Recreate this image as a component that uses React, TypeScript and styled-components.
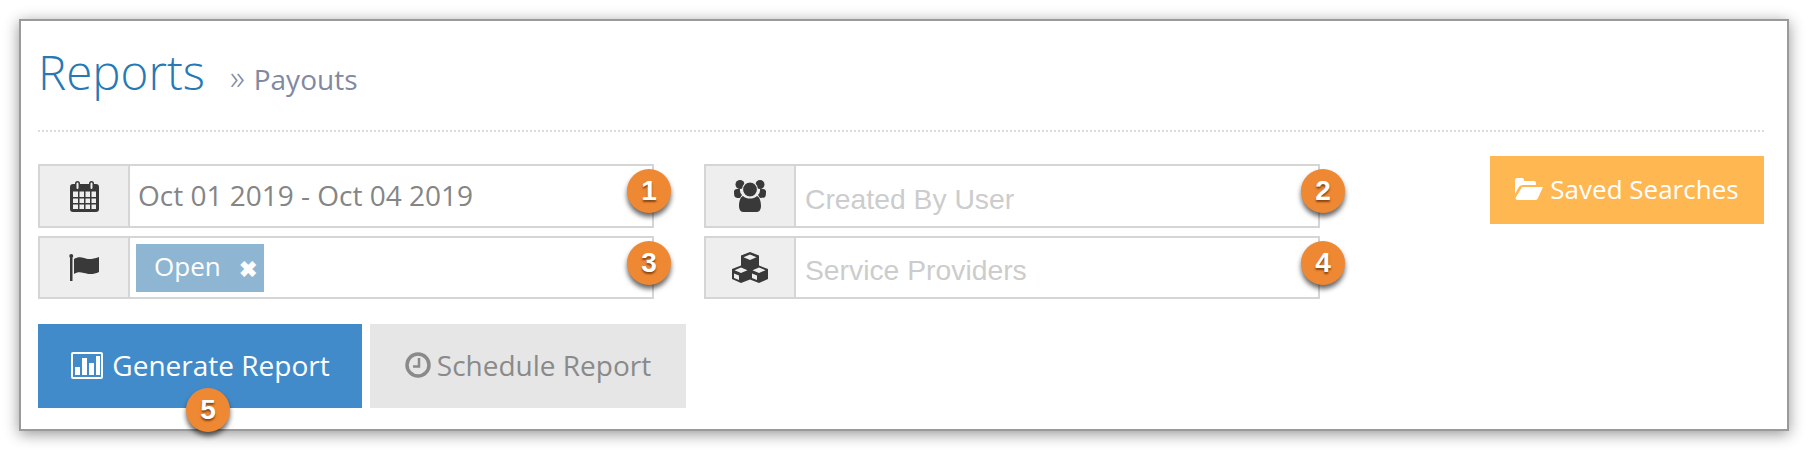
import React from 'react';
import styled, { createGlobalStyle } from 'styled-components';

const GlobalStyle = createGlobalStyle`
  html, body {
    margin: 0;
    padding: 0;
    background: #fff;
  }
  body {
    font-family: "Open Sans", sans-serif;
  }
`;

const Page = styled.div`
  width: 1808px;
  height: 450px;
  padding: 19px;
  box-sizing: border-box;
  overflow: hidden;
`;

const Panel = styled.section`
  width: 1770px;
  height: 412px;
  box-sizing: border-box;
  border: 2px solid #9a9a9a;
  background: #fff;
  box-shadow: 0 3px 14px rgba(0, 0, 0, 0.42);
  padding: 0 23px 0 17px;
`;

const Header = styled.header`
  height: 111px;
  box-sizing: border-box;
  display: flex;
  align-items: baseline;
  padding-top: 19px;
  border-bottom: 2px dotted #dcdcdc;
`;

const Title = styled.h1`
  margin: 0;
  font-size: 47.500px;
  line-height: 63px;
  font-weight: 300;
  color: #2679b5;
`;

const Crumb = styled.small`
  margin-left: 25px;
  font-size: 28px;
  font-weight: 400;
  color: #8089a0;
`;

const Chevrons = styled.span`
  font-size: 34px;
  font-weight: 300;
  line-height: 1;
  margin-right: 9px;
`;

const Filters = styled.div`
  display: flex;
  justify-content: space-between;
  padding-top: 24px;
`;

const Fields = styled.div`
  display: grid;
  grid-template-columns: 616px 616px;
  grid-template-rows: 64px 63px;
  column-gap: 50px;
  row-gap: 8px;
  padding-top: 8px;
`;

const Field = styled.div`
  position: relative;
  display: flex;
  box-sizing: border-box;
  border: 2px solid #d5d5d5;
  background: #fff;
`;

const Addon = styled.span`
  flex: 0 0 88px;
  display: flex;
  align-items: center;
  justify-content: center;
  background: #eeeeee;
  border-right: 2px solid #d5d5d5;
  color: #393939;
`;

const Value = styled.span`
  display: flex;
  align-items: center;
  padding: 0 0 2px 8px;
  font-size: 28px;
  color: #858585;
`;

const Placeholder = styled.span`
  display: flex;
  align-items: center;
  padding: 6px 0 0 9px;
  font-family: "Liberation Sans", Arial, sans-serif;
  font-size: 28.300px;
  color: #cccccc;
`;

const Tag = styled.span`
  align-self: center;
  display: flex;
  align-items: center;
  height: 48px;
  width: 128px;
  box-sizing: border-box;
  margin-left: 6px;
  padding: 0 0 3px 18px;
  background: #8eb6d2;
  color: #fff;
  font-size: 26px;
`;

const TagClose = styled.span`
  margin: 4px 0 0 18px;
  font-size: 22px;
  font-weight: 700;
  line-height: 1;
`;

const Badge = styled.span<{ $right: number; $bottom?: number }>`
  position: absolute;
  top: ${(p) => (p.$bottom === undefined ? '3px' : 'auto')};
  right: ${(p) => p.$right}px;
  bottom: ${(p) => (p.$bottom === undefined ? 'auto' : `${p.$bottom}px`)};
  width: 44px;
  height: 44px;
  border-radius: 50%;
  display: flex;
  align-items: center;
  justify-content: center;
  background: #ee8833;
  color: #fff;
  font-family: "Liberation Sans", Arial, sans-serif;
  font-size: 28px;
  font-weight: 700;
  text-shadow: 0 2px 2px rgba(90, 40, 0, 0.7);
  box-shadow: 0 4px 5px rgba(0, 0, 0, 0.6);
`;

const Actions = styled.div`
  display: flex;
  gap: 8px;
  padding-top: 25px;
`;

const Button = styled.button<{ $kind: 'primary' | 'muted' }>`
  position: relative;
  display: flex;
  align-items: center;
  justify-content: center;
  gap: ${(p) => (p.$kind === 'primary' ? '9px' : '6px')};
  height: 84px;
  width: ${(p) => (p.$kind === 'primary' ? '324px' : '316px')};
  padding: 0 0 2px ${(p) => (p.$kind === 'primary' ? '1px' : '0')};
  border: 0;
  background: ${(p) => (p.$kind === 'primary' ? '#428bca' : '#e6e6e6')};
  color: ${(p) => (p.$kind === 'primary' ? '#fff' : '#8a8a8a')};
  font-family: inherit;
  font-size: 28px;
`;

const SavedButton = styled.button`
  display: flex;
  align-items: center;
  justify-content: center;
  gap: 7px;
  width: 274px;
  height: 68px;
  padding: 0 0 2px;
  border: 0;
  background: #ffb752;
  color: #fff;
  font-family: inherit;
  font-size: 26px;
`;

const CalendarIcon = () => (
  <svg width="29" height="31" viewBox="0 0 29 31">
    <path
      fill="currentColor"
      fillRule="evenodd"
      d="M3 3h2V2.500a2.500 2.500 0 0 1 5 0V3h9v-.5a2.500 2.500 0 0 1 5 0V3h2a3 3 0 0 1 3 3v22a3 3 0 0 1-3 3H3a3 3 0 0 1-3-3V6a3 3 0 0 1 3-3zM6.500 2.500V7a1 1 0 0 0 2 0V2.500a1 1 0 0 0-2 0zm14 0V7a1 1 0 0 0 2 0V2.500a1 1 0 0 0-2 0zM3 10.500V16h5v-5.500zm6.500 0V16h4.500v-5.500zm6 0V16H20v-5.500zm6 0V16H26v-5.500zM3 17.500V22h5v-4.500zm6.500 0V22h4.500v-4.500zm6 0V22H20v-4.500zm6 0V22H26v-4.500zM3 23.500V28h5v-4.500zm6.500 0V28h4.500v-4.500zm6 0V28H20v-4.500zm6 0V28H26v-4.500z"
    />
  </svg>
);

const FlagIcon = () => (
  <svg width="30" height="27" viewBox="0 0 30 27">
    <path fill="currentColor" d="M1 3h2.500v24H1zM2.250 0a2 2 0 1 1 0 4 2 2 0 0 1 0-4z" />
    <path
      fill="currentColor"
      d="M5 5c3-2 7-2 10-1s7 2 15-1v15c-6 3-11 2-15 1s-7-1-10 1z"
    />
  </svg>
);

const UsersIcon = () => (
  <svg width="34" height="32" viewBox="0 0 34 32">
    <g fill="currentColor">
      <circle cx="7" cy="4.500" r="4.500" />
      <circle cx="27" cy="4.500" r="4.500" />
      <path d="M1 11a3 3 0 0 1 3-2h3a7 7 0 0 0 2 6l-2 3c-2 0-4 0-5-1-1-1-1-4-1-6zM33 11a3 3 0 0 0-3-2h-3a7 7 0 0 1-2 6l2 3c2 0 4 0 5-1 1-1 1-4 1-6z" />
      <circle cx="17" cy="9.500" r="7.500" stroke="#eeeeee" strokeWidth="1.200" />
      <path d="M10 16c2 2 4.500 2.500 7 2.500s5-.5 7-2.500c2.500 1 4 5 4 10 0 3-1.500 6-4 6H10c-2.500 0-4-3-4-6 0-5 1.500-9 4-10z" />
    </g>
  </svg>
);

const CubesIcon = () => (
  <svg width="38" height="31" viewBox="0 0 38 31">
    <path
      fill="currentColor"
      fillRule="evenodd"
      d="M19 0l9 3.500v10l9 3.500v10l-9 4-9-3.500L10 31l-9-4V17l9-3.500v-10zM19 2.500l-6.500 2.700L19 8l6.500-2.800zM10 15.500l-6.500 2.700L10 21l6.500-2.800zM28 15.500l-6.500 2.700L28 21l6.500-2.800zM3 21.500V26l5 2v-4.500zM21 21.500V26l5 2v-4.500z"
    />
  </svg>
);

const ChartIcon = () => (
  <svg width="32" height="27" viewBox="0 0 32 27">
    <path
      fill="currentColor"
      fillRule="evenodd"
      d="M2 0h28a2 2 0 0 1 2 2v23a2 2 0 0 1-2 2H2a2 2 0 0 1-2-2V2a2 2 0 0 1 2-2zm0 2v23h28V2zM4 15h5v8H4zm7-9h5v17h-5zm7 5h5v12h-5zm7-7h4v19h-4z"
    />
  </svg>
);

const ClockIcon = () => (
  <svg width="26" height="26" viewBox="0 0 26 26">
    <circle cx="13" cy="13" r="11" fill="none" stroke="currentColor" strokeWidth="3.500" />
    <path fill="none" stroke="currentColor" strokeWidth="2.500" d="M14 6v8.500H8" />
  </svg>
);

const FolderIcon = () => (
  <svg width="28" height="22" viewBox="0 0 28 22">
    <path
      fill="#fff"
      d="M0 16V2a2 2 0 0 1 2-2h5a2 2 0 0 1 2 2v1h10a2 2 0 0 1 2 2v2H8c-2 0-3.500 1-4.500 2.500zM7 9h21l-5 11a3 3 0 0 1-2 2H2a2 2 0 0 1-1.500-2z"
    />
  </svg>
);

export default function App() {
  return (
    <Page>
      <GlobalStyle />
      <Panel>
        <Header>
          <Title>Reports</Title>
          <Crumb>
            <Chevrons>»</Chevrons>
            Payouts
          </Crumb>
        </Header>
        <Filters>
          <Fields>
            <Field>
              <Addon><CalendarIcon /></Addon>
              <Value>Oct 01 2019 - Oct 04 2019</Value>
              <Badge $right={-19}>1</Badge>
            </Field>
            <Field>
              <Addon><UsersIcon /></Addon>
              <Placeholder>Created By User</Placeholder>
              <Badge $right={-27}>2</Badge>
            </Field>
            <Field>
              <Addon><FlagIcon /></Addon>
              <Tag>
                Open
                <TagClose>✖</TagClose>
              </Tag>
              <Badge $right={-19}>3</Badge>
            </Field>
            <Field>
              <Addon><CubesIcon /></Addon>
              <Placeholder>Service Providers</Placeholder>
              <Badge $right={-27}>4</Badge>
            </Field>
          </Fields>
          <SavedButton>
            <FolderIcon />
            Saved Searches
          </SavedButton>
        </Filters>
        <Actions>
          <Button $kind="primary">
            <ChartIcon />
            Generate Report
            <Badge $right={132} $bottom={-24}>5</Badge>
          </Button>
          <Button $kind="muted">
            <ClockIcon />
            Schedule Report
          </Button>
        </Actions>
      </Panel>
    </Page>
  );
}
